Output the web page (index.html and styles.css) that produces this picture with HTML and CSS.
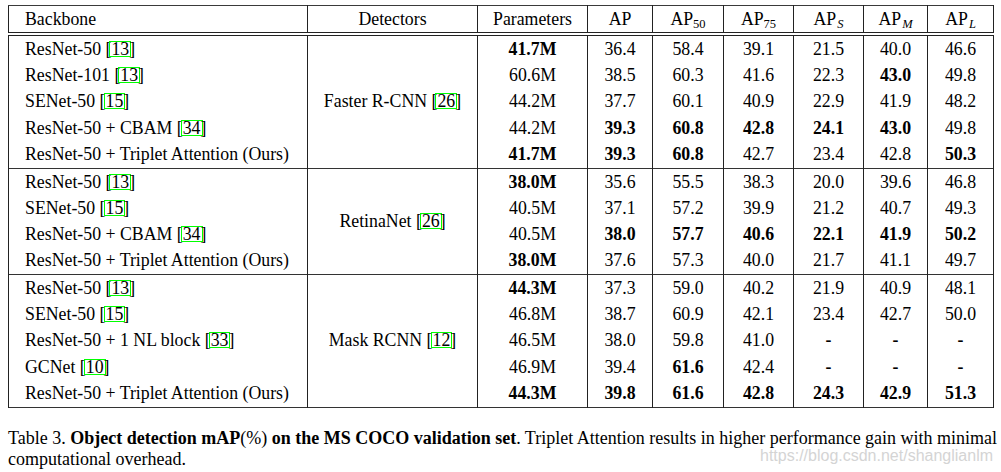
FILE: index.html
```html
<!DOCTYPE html>
<html>
<head>
<meta charset="utf-8">
<link rel="stylesheet" href="styles.css">
</head>
<body>
<div class="page">
<table class="results">
<colgroup>
<col class="c-backbone"><col class="c-det"><col class="c-param"><col class="c-ap"><col class="c-ap50"><col class="c-ap75"><col class="c-aps"><col class="c-apm"><col class="c-apl">
</colgroup>
<thead>
<tr>
<th class="left">Backbone</th><th>Detectors</th><th>Parameters</th><th>AP</th>
<th>AP<sub>50</sub></th><th>AP<sub>75</sub></th><th>AP<sub class="it">S</sub></th><th>AP<sub class="it">M</sub></th><th>AP<sub class="it">L</sub></th>
</tr>
</thead>
<tbody class="g5">
<tr><td class="left">ResNet-50 [<span class="cite">13</span>]</td><td rowspan="5">Faster R-CNN [<span class="cite">26</span>]</td><td class="b">41.7M</td><td>36.4</td><td>58.4</td><td>39.1</td><td>21.5</td><td>40.0</td><td>46.6</td></tr>
<tr><td class="left">ResNet-101 [<span class="cite">13</span>]</td><td>60.6M</td><td>38.5</td><td>60.3</td><td>41.6</td><td>22.3</td><td class="b">43.0</td><td>49.8</td></tr>
<tr><td class="left">SENet-50 [<span class="cite">15</span>]</td><td>44.2M</td><td>37.7</td><td>60.1</td><td>40.9</td><td>22.9</td><td>41.9</td><td>48.2</td></tr>
<tr><td class="left">ResNet-50 + CBAM [<span class="cite">34</span>]</td><td>44.2M</td><td class="b">39.3</td><td class="b">60.8</td><td class="b">42.8</td><td class="b">24.1</td><td class="b">43.0</td><td>49.8</td></tr>
<tr><td class="left">ResNet-50 + Triplet Attention (Ours)</td><td class="b">41.7M</td><td class="b">39.3</td><td class="b">60.8</td><td>42.7</td><td>23.4</td><td>42.8</td><td class="b">50.3</td></tr>
</tbody>
<tbody class="g4">
<tr><td class="left">ResNet-50 [<span class="cite">13</span>]</td><td rowspan="4">RetinaNet [<span class="cite">26</span>]</td><td class="b">38.0M</td><td>35.6</td><td>55.5</td><td>38.3</td><td>20.0</td><td>39.6</td><td>46.8</td></tr>
<tr><td class="left">SENet-50 [<span class="cite">15</span>]</td><td>40.5M</td><td>37.1</td><td>57.2</td><td>39.9</td><td>21.2</td><td>40.7</td><td>49.3</td></tr>
<tr><td class="left">ResNet-50 + CBAM [<span class="cite">34</span>]</td><td>40.5M</td><td class="b">38.0</td><td class="b">57.7</td><td class="b">40.6</td><td class="b">22.1</td><td class="b">41.9</td><td class="b">50.2</td></tr>
<tr><td class="left">ResNet-50 + Triplet Attention (Ours)</td><td class="b">38.0M</td><td>37.6</td><td>57.3</td><td>40.0</td><td>21.7</td><td>41.1</td><td>49.7</td></tr>
</tbody>
<tbody class="g5">
<tr><td class="left">ResNet-50 [<span class="cite">13</span>]</td><td rowspan="5">Mask RCNN [<span class="cite">12</span>]</td><td class="b">44.3M</td><td>37.3</td><td>59.0</td><td>40.2</td><td>21.9</td><td>40.9</td><td>48.1</td></tr>
<tr><td class="left">SENet-50 [<span class="cite">15</span>]</td><td>46.8M</td><td>38.7</td><td>60.9</td><td>42.1</td><td>23.4</td><td>42.7</td><td>50.0</td></tr>
<tr><td class="left">ResNet-50 + 1 NL block [<span class="cite">33</span>]</td><td>46.5M</td><td>38.0</td><td>59.8</td><td>41.0</td><td class="b">-</td><td class="b">-</td><td class="b">-</td></tr>
<tr><td class="left">GCNet [<span class="cite">10</span>]</td><td>46.9M</td><td>39.4</td><td class="b">61.6</td><td>42.4</td><td class="b">-</td><td class="b">-</td><td class="b">-</td></tr>
<tr><td class="left">ResNet-50 + Triplet Attention (Ours)</td><td class="b">44.3M</td><td class="b">39.8</td><td class="b">61.6</td><td class="b">42.8</td><td class="b">24.3</td><td class="b">42.9</td><td class="b">51.3</td></tr>
</tbody>
</table>
<p class="caption">Table 3. <b>Object detection mAP</b>(%) <b>on the MS COCO validation set</b>. Triplet Attention results in higher performance gain with minimal<br>computational overhead.</p>
</div>
<div class="watermark">https://blog.csdn.net/shanglianlm</div>
</body>
</html>
```

FILE: styles.css
```css
html, body {
  margin: 0;
  padding: 0;
  background: #ffffff;
}
body {
  font-family: "Liberation Serif", "Times New Roman", serif;
  font-size: 17.8px;
  color: #000000;
  width: 1001px;
  height: 472px;
  overflow: hidden;
  position: relative;
}
.page {
  padding: 5px 0 0 8px;
}
.results {
  border-collapse: collapse;
  table-layout: fixed;
  width: 986px;
  border: 1px solid #3a3a3a;
}
.c-backbone { width: 299px; }
.c-det { width: 170px; }
.c-param { width: 110px; }
.c-ap { width: 65px; }
.c-ap50 { width: 71px; }
.c-ap75 { width: 70px; }
.c-aps { width: 70px; }
.c-apm { width: 64px; }
.c-apl { width: 66px; }

.results th,
.results td {
  border-left: 1px solid #222222;
  border-right: 1px solid #222222;
  padding: 0;
  text-align: center;
  vertical-align: middle;
  white-space: nowrap;
  font-weight: normal;
  line-height: normal;
}
.results th {
  height: 26px;
  border-top: 1px solid #3a3a3a;
  border-bottom: 4px double #222222;
}
.results tbody {
  border-bottom: 1px solid #333333;
}
.g5 td { height: 26.4px; }
.g4 td { height: 26.25px; }
.results .left {
  text-align: left;
  padding-left: 16px;
}
.results .b {
  font-weight: bold;
}
sub {
  font-size: 12.5px;
  vertical-align: -3px;
  line-height: 0;
}
sub.it {
  font-style: italic;
  margin-left: 1px;
}
.cite {
  display: inline-block;
  line-height: 16px;
  padding: 0 2px;
  margin: 0 -2px;
  box-shadow: inset 0 0 0 1px #00ff00;
}
.caption {
  margin: 20px 0 0 0;
  font-size: 18px;
  line-height: 21px;
  white-space: nowrap;
}
.caption b {
  font-weight: bold;
}
.watermark {
  position: absolute;
  left: 760px;
  top: 447px;
  font-family: "Liberation Sans", Arial, sans-serif;
  font-size: 16px;
  line-height: 18px;
  color: #d4d4d4;
  white-space: nowrap;
}
```
